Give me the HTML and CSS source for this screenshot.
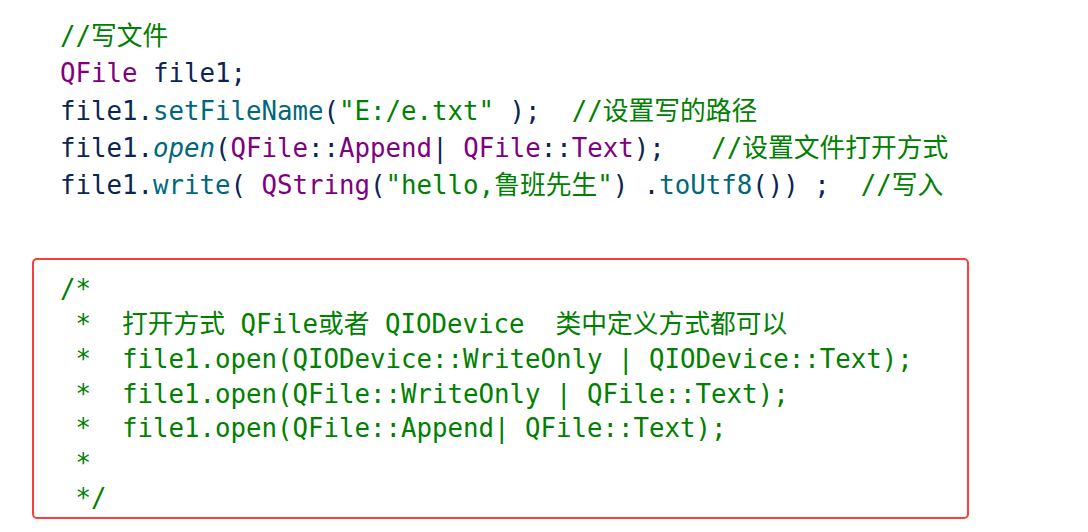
FILE: index.html
```html
<!DOCTYPE html>
<html>
<head>
<meta charset="utf-8">
<link rel="stylesheet" href="styles.css">
</head>
<body>
<div class="page">
<pre class="code"><span class="cm">//写文件</span>
<span class="ty">QFile</span> file1;
file1.<span class="fn">setFileName</span>(<span class="st">"E:/e.txt"</span> );  <span class="cm">//设置写的路径</span>
file1.<span class="fn it">open</span>(<span class="ty">QFile</span>::<span class="ty">Append</span>| <span class="ty">QFile</span>::<span class="ty">Text</span>);   <span class="cm">//设置文件打开方式</span>
file1.<span class="fn">write</span>( <span class="ty">QString</span>(<span class="st">"hello,鲁班先生"</span>) .<span class="fn">toUtf8</span>()) ;  <span class="cm">//写入</span></pre>
<div class="note">
<pre class="code note-code">/*
 *  打开方式 QFile或者 QIODevice  类中定义方式都可以
 *  file1.open(QIODevice::WriteOnly | QIODevice::Text);
 *  file1.open(QFile::WriteOnly | QFile::Text);
 *  file1.open(QFile::Append| QFile::Text);
 *
 */</pre>
</div>
</div>
</body>
</html>
```
FILE: styles.css
```css
html, body {
  margin: 0;
  padding: 0;
  background: #ffffff;
}
.page {
  padding: 18px 0 0 32px;
  width: 937px;
}
.code {
  margin: 0;
  padding-left: 28px;
  font-family: "DejaVu Sans Mono", "Noto Sans CJK SC", monospace;
  font-size: 25.75px;
  line-height: 37.3px;
  color: #0b2553;
  white-space: pre;
}
.cm { color: #008000; }
.st { color: #008000; }
.ty { color: #800080; }
.fn { color: #00677c; }
.it { font-style: italic; }
.note {
  margin-top: 54px;
  border: 2px solid #ff3b3b;
  border-radius: 5px;
  height: 261px;
  box-sizing: border-box;
  padding: 12px 0 0 26px;
}
.note-code {
  padding-left: 0;
  color: #008000;
  line-height: 34.7px;
}
```
